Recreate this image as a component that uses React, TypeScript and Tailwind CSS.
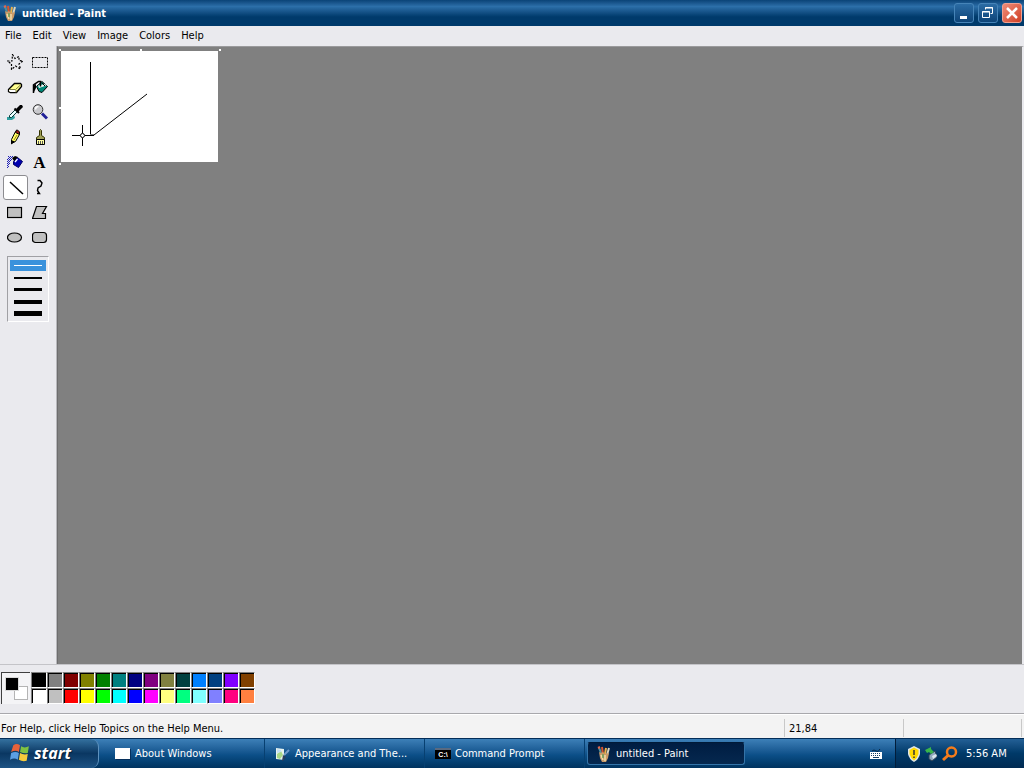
import type { ReactNode } from 'react';
import clsx from 'clsx';

const colors = [
  ['#000000', '#808080', '#800000', '#808000', '#008000', '#008080', '#000080', '#800080', '#808040', '#004040', '#0080ff', '#004080', '#8000ff', '#804000'],
  ['#ffffff', '#c0c0c0', '#ff0000', '#ffff00', '#00ff00', '#00ffff', '#0000ff', '#ff00ff', '#ffff80', '#00ff80', '#80ffff', '#8080ff', '#ff0080', '#ff8040'],
];

const tools: { name: string; icon: ReactNode }[] = [
  {
    name: 'Free-Form Select',
    icon: <path d="M5.500 .5L8 4.500l4-2v4l4 .5-4 3 1.500 5-5-3-4 3.500V10L.500 7h4.500z" fill="none" stroke="#000" strokeWidth="1.200" strokeDasharray="2 1.500" />,
  },
  {
    name: 'Select',
    icon: <rect x=".5" y="3.500" width="15" height="10" fill="none" stroke="#000" strokeDasharray="2 1" />,
  },
  {
    name: 'Eraser',
    icon: (
      <>
        <path d="M1.500 10.500l6-6h6l1 1v2l-5 6h-6l-2-1z" fill="#ffff90" stroke="#000" strokeWidth="1.300" />
        <path d="M2 10.500h6l1 .5v2H3.500L2 12z" fill="#fff" />
        <path d="M2 10.500h6.500l5.500-5M9 11v2.500" fill="none" stroke="#808040" />
      </>
    ),
  },
  {
    name: 'Fill With Color',
    icon: (
      <>
        <path d="M4.500 7.500L10 2.500l5.500 5-5.500 6-3-1z" fill="#008878" stroke="#000" />
        <path d="M6 6.500l7-1.500 1.500 1.500L7 9z" fill="#eef8f4" />
        <path d="M8.500 7.500V2.500h-2L1.500 6v8" fill="none" stroke="#000" strokeWidth="1.500" />
        <path d="M1 7l3-2v4l-2 4H1z" fill="#000" />
        <path d="M10 4l3 3" stroke="#000" />
      </>
    ),
  },
  {
    name: 'Pick Color',
    icon: (
      <>
        <path d="M0 13h5l2-2 1 3-3 2H0z" fill="#30a0a0" />
        <path d="M2.500 13.500v-2l6-6 2 2-6 6z" fill="#e8ffff" stroke="#083838" />
        <path d="M7.500 4.500l4.500 4.500" stroke="#000" strokeWidth="2" />
        <path d="M9 5l4-4h2l1 2-5 5z" fill="#000" />
      </>
    ),
  },
  {
    name: 'Magnifier',
    icon: (
      <>
        <path d="M10 9.500l5 5" stroke="#202098" strokeWidth="3" />
        <circle cx="6" cy="5.500" r="4.800" fill="#c8c8cc" stroke="#333" />
        <path d="M3.500 5.500a3 3 0 013-3" fill="none" stroke="#fff" strokeWidth="1.500" />
      </>
    ),
  },
  {
    name: 'Pencil',
    icon: (
      <>
        <path d="M4.500 14.500v-4l4-8h2l2 1v2l-4 7z" fill="#ffff60" stroke="#000" />
        <path d="M8.500 3.500l4 2V3l-2-2h-1z" fill="#a01818" stroke="#000" />
        <path d="M4 11v4.500l4-3z" fill="#000" />
        <path d="M10 6l-3 5" stroke="#a08020" />
      </>
    ),
  },
  {
    name: 'Brush',
    icon: (
      <>
        <path d="M7.500 6.500v-5l1-1 1 1v5l3 2v2h-8v-2z" fill="#a0a058" stroke="#333300" />
        <path d="M4.500 10.500h8v5h-8z" fill="#ffffa0" stroke="#000" />
        <path d="M6.500 12v3M8.500 12v3M10.500 12v3" stroke="#555" />
      </>
    ),
  },
  {
    name: 'Airbrush',
    icon: (
      <>
        <path
          d="M1 2h1v1H1zM3 2h1v1H3zM5 2h1v1H5zM2 3h1v1H2zM4 3h1v1H4zM1 4h1v1H1zM3 4h1v1H3zM0 5h1v1H0zM2 5h1v1H2zM4 5h1v1H4zM1 6h1v1H1zM3 6h1v1H3zM0 7h1v1H0zM2 7h1v1H2zM1 8h1v1H1zM0 9h1v1H0zM2 9h1v1H2zM1 10h1v1H1zM0 11h1v1H0zM1 12h1v1H1zM0 13h1v1H0z"
          fill="#2020b8"
        />
        <path d="M6.500 7.500l4-4 5 4-4 6-5-3z" fill="#0000b0" stroke="#000060" />
        <path d="M5 4l3-2 3 1-4 4z" fill="#000" />
        <path d="M8 8l2.500-3" stroke="#fff" strokeWidth="1.300" />
      </>
    ),
  },
  { name: 'Text', icon: null },
  { name: 'Line', icon: <path d="M2 2l13 12" stroke="#000" strokeWidth="1.500" /> },
  { name: 'Curve', icon: <path d="M5.500 1.500H8l2 2.500-1 3-3 2-.5 2.500 2 3H5" fill="none" stroke="#000" strokeWidth="1.400" /> },
  { name: 'Rectangle', icon: <rect x=".5" y="3.500" width="14" height="10" fill="#c0c0c0" stroke="#000" strokeWidth="1.200" /> },
  { name: 'Polygon', icon: <path d="M4.500 2.500h10l-4 7h3v5H.500z" fill="#c0c0c0" stroke="#000" strokeWidth="1.200" /> },
  { name: 'Ellipse', icon: <ellipse cx="7.500" cy="8.500" rx="7" ry="4.500" fill="#c0c0c0" stroke="#000" strokeWidth="1.200" /> },
  { name: 'Rounded Rectangle', icon: <rect x=".5" y="3.500" width="14" height="10" rx="3" fill="#c0c0c0" stroke="#000" strokeWidth="1.200" /> },
];

const lineWidths = [
  { label: '1 pixel', bar: 'h-px' },
  { label: '2 pixels', bar: 'h-0.5' },
  { label: '3 pixels', bar: 'h-[3px]' },
  { label: '4 pixels', bar: 'h-1' },
  { label: '5 pixels', bar: 'h-[5px]' },
];

function PaintIcon() {
  return (
    <svg viewBox="0 0 16 16" className="size-4 shrink-0">
      <path d="M3 2l3 7" stroke="#4f8f98" strokeWidth="2" />
      <path d="M6 1l1 7" stroke="#d8542c" strokeWidth="2" />
      <path d="M9 8l1-6" stroke="#e9b04a" strokeWidth="2" />
      <path d="M11 9l2-7" stroke="#ded5bd" strokeWidth="2" />
      <path d="M3 6l2 1 2-1 2 2 4-1-1 5-2 4H6l-2-4z" fill="#c99a68" />
      <path d="M5 9l2 5M9 9v6" stroke="#f0dda8" strokeWidth="1.500" />
      <path d="M7 8v4" stroke="#6b9f5d" strokeWidth="1.500" />
      <path d="M2 2l2-1" stroke="#e6674c" strokeWidth="2" />
    </svg>
  );
}

function WindowIcon() {
  return (
    <svg viewBox="0 0 16 16" className="size-4 shrink-0">
      <path d="M1 3h15v11H1z" fill="#06305c" />
      <path d="M0 2h15v11H0z" fill="#fff" />
    </svg>
  );
}

function AppearanceIcon() {
  return (
    <svg viewBox="0 0 16 16" className="size-4 shrink-0">
      <path d="M1 2l8 1v11l-8-1z" fill="#e8f4f0" />
      <path d="M2 8l4-3 2 4-3 4-3-1z" fill="#a8d888" />
      <path d="M2 3l4 1v2L2 7z" fill="#c4e0f4" />
      <path d="M14 4l-5 5" stroke="#6c98cc" strokeWidth="2" />
      <path d="M8 9l3 2-3 4H7z" fill="#283c5c" />
    </svg>
  );
}

function CommandIcon() {
  return (
    <span className="flex h-[11px] w-4 shrink-0 items-center justify-center border-t-2 border-[#5a6a80] bg-black font-['Liberation_Sans'] text-[7px] leading-none font-bold text-white">
      C:\
    </span>
  );
}

const tasks = [
  { label: 'About Windows', icon: <WindowIcon /> },
  { label: 'Appearance and The...', icon: <AppearanceIcon /> },
  { label: 'Command Prompt', icon: <CommandIcon /> },
  { label: 'untitled - Paint', icon: <PaintIcon />, active: true },
];

function TitleBar() {
  return (
    <header className="flex h-[26px] items-center bg-linear-to-b from-[#0a4377] via-[#2c6fa9] via-25% to-[#003a6b] to-65% px-0.5">
      <PaintIcon />
      <h1 className="ml-1 flex-1 text-[11px] font-bold text-white">untitled - Paint</h1>
      <div className="flex gap-1">
        <button aria-label="Minimize" className="size-5 rounded-[3px] border border-[#4684b8] bg-linear-to-b from-[#2b6ca5] to-[#0d4478]">
          <svg viewBox="0 0 18 18"><path d="M5 12h7v3H5z" fill="#fff" /></svg>
        </button>
        <button aria-label="Restore" className="size-5 rounded-[3px] border border-[#4684b8] bg-linear-to-b from-[#2b6ca5] to-[#0d4478]">
          <svg viewBox="0 0 18 18" fill="none" stroke="#fff">
            <path d="M3.500 7.500h7v6h-7zM3 8h8M6.500 5.500v-2h7v6h-2M6 4h8" />
          </svg>
        </button>
        <button aria-label="Close" className="size-5 rounded-[3px] border border-[#f0a090] bg-linear-to-br from-[#ee8b78] to-[#cf3c20]">
          <svg viewBox="0 0 18 18"><path d="M4 4l10 10M14 4L4 14" stroke="#fff" strokeWidth="2.500" /></svg>
        </button>
      </div>
    </header>
  );
}

function Toolbox() {
  return (
    <aside className="w-[57px] shrink-0 border-r border-[#b8b8bc] pt-1 pl-[3px]">
      <div className="grid w-[50px] grid-cols-2">
        {tools.map(({ name, icon }) => (
          <button
            key={name}
            aria-label={name === 'Text' ? undefined : name}
            className={clsx(
              'flex size-[25px] items-center justify-center',
              name === 'Line' ? 'rounded-[3px] border border-[#8c8c90] bg-white' : 'pr-0.5 pb-px'
            )}
          >
            {name === 'Text' ? (
              <span className="font-['Liberation_Serif'] text-[17px] leading-none font-bold">A</span>
            ) : (
              <svg viewBox="0 0 16 16" className="size-4">{icon}</svg>
            )}
          </button>
        ))}
      </div>
      <div className="mt-1.5 ml-1 flex h-[66px] w-[42px] flex-col border border-t-[#a0a0a4] border-r-white border-b-white border-l-[#a0a0a4] px-0.5 py-0.5">
        {lineWidths.map(({ label, bar }, i) => (
          <button
            key={label}
            aria-label={label}
            className={clsx('flex h-3 w-full items-center justify-center border-t border-[#eaeaee]', i === 0 && 'bg-[#3a92dc]')}
          >
            <span className={clsx('w-7', bar, i === 0 ? 'bg-white' : 'bg-black')} />
          </button>
        ))}
      </div>
    </aside>
  );
}

function Canvas() {
  return (
    <main className="flex-1 border-t border-r-2 border-t-[#9a9a9c] border-r-[#eaeaee] border-l border-l-[#6e6e6e] bg-[#808080] pt-0.5 pl-px">
      <svg viewBox="0 0 162 116" className="h-[116px] w-[162px]">
        <path d="M2 2h157v111H2z" fill="#fff" />
        <g fill="none" stroke="#000">
          <path d="M31.500 13v72M31 86h4l53-41" />
          <path d="M13 86.500h8M26 86.500h9M23.500 76v8M23.500 89v8" />
          <circle cx="23.500" cy="86.500" r="2" />
        </g>
        <path d="M0 0h2v2H0zM81 0h2v2h-2zM160 0h2v2h-2zM0 58h2v2H0zM0 114h2v2H0z" fill="#fff" />
      </svg>
    </main>
  );
}

function ColorBox() {
  return (
    <section aria-label="Color box" className="flex h-[50px] items-start gap-px border-t border-b border-t-[#c4c4c8] border-b-[#a8a8ac] pt-[7px] pl-px">
      <div className="relative h-8 w-[29px] border-t border-l border-[#404040] bg-[#f4f4f6]">
        <span className="absolute right-0.5 bottom-1 size-3.5 border border-[#b4b4b4] bg-white" />
        <span className="absolute top-1 left-[3px] size-3.5 border border-[#d8d8d8] bg-black" />
      </div>
      <div className="grid grid-cols-[repeat(14,16px)] grid-rows-[16px_16px]">
        {colors.flat().map((color) => (
          <button key={color} aria-label={color} className="border border-t-[#808080] border-r-white border-b-white border-l-[#808080] p-0">
            <span className="block size-full border-t border-l border-black" style={{ backgroundColor: color }} />
          </button>
        ))}
      </div>
    </section>
  );
}

function StatusBar() {
  return (
    <footer className="flex h-6 items-center border-t border-white bg-[#f3f3f3] pt-[3px] pr-0.5 text-[11px] whitespace-nowrap">
      <p className="flex-1 pl-px">For Help, click Help Topics on the Help Menu.</p>
      <p className="flex h-[18px] w-[119px] items-center border-l border-[#c8c8c8] pl-1">21,84</p>
      <p className="h-[18px] w-[119px] border-x border-[#c8c8c8]" />
    </footer>
  );
}

function Taskbar() {
  return (
    <nav aria-label="Taskbar" className="flex h-[30px] border-t border-[#032d58] bg-linear-to-b from-[#3d80b8] via-[#0c4f88] via-55% to-[#00335f] text-[11px] whitespace-nowrap text-white">
      <button className="mr-2 flex w-[99px] items-center rounded-r-lg border-r border-[#5d91bd] bg-linear-to-b from-[#34719f] via-[#0a3762] via-50% to-[#1d5384] pb-0.5 pl-2.5">
        <svg viewBox="0 0 18 18" className="size-5">
          <path d="M3 2q3-2 6 0L8 8Q5 6 1 8z" fill="#e8623a" />
          <path d="M10 3q3 2 7 0l-1 6q-3 1-7-1z" fill="#7fc241" />
          <path d="M1 9q4-2 7 0l-1 6q-3-2-7 0z" fill="#5b9fe4" />
          <path d="M9 9q3 2 7 1l-1 6q-4 1-7-1z" fill="#f6cb3c" />
        </svg>
        <span className="ml-1 font-['Open_Sans'] text-base leading-none font-bold italic [text-shadow:1px_1px_1px_#001c38]">start</span>
      </button>
      <div className="flex flex-1 gap-0.5">
        {tasks.map(({ label, icon, active }) => (
          <button
            key={label}
            className={clsx(
              'flex w-[158px] items-center gap-1 border-r pl-2',
              active
                ? 'my-[3px] rounded-[3px] border border-[#3474a8] border-t-[#001a38] bg-linear-to-b from-[#001d42] to-[#06284f]'
                : 'border-[#074071]'
            )}
          >
            {icon}
            {label}
          </button>
        ))}
      </div>
      <button aria-label="Keyboard" className="mr-3">
        <svg viewBox="0 0 14 14" className="size-3.5">
          <path d="M3 4q2-2 4 0t4-2" fill="none" stroke="#062848" />
          <path d="M1 5h12v7H1z" fill="#fff" />
          <path d="M2 6.500h10M2 8.500h10" stroke="#173d63" strokeDasharray="1 1" />
          <path d="M4 10.500h6" stroke="#173d63" />
        </svg>
      </button>
      <div className="flex w-[129px] items-center border-l border-[#021d3a] bg-linear-to-b from-[#236096] via-[#003968] via-50% to-[#002a52] pl-2.5">
        <svg viewBox="0 0 16 16" className="size-4">
          <path d="M8 0l6 3v5q-1 5-6 8-5-3-6-8V3z" fill="#dfe5e8" />
          <path d="M8 1.500l4.500 2.500v4q-1 4-4.500 6.500Q4.500 12 3.500 8V4z" fill="#ffda00" />
          <path d="M8 4v5M8 10.500V12" stroke="#333" strokeWidth="1.500" />
        </svg>
        <svg viewBox="0 0 16 16" className="ml-0.5 size-4">
          <path d="M5 9l6-4 2 6-5 4-3-2z" fill="#93a9bd" stroke="#2c4258" />
          <path d="M8 10l4-2 1 2-4 3z" fill="#dce8f0" />
          <path d="M1 4l6-3v2l3 3-3 2-2-2-2 1z" fill="#39b54a" />
        </svg>
        <svg viewBox="0 0 16 16" className="ml-0.5 size-4">
          <circle cx="9.500" cy="6" r="4.500" fill="none" stroke="#f57c1b" strokeWidth="2.500" />
          <path d="M6.500 9L1 14" stroke="#f57c1b" strokeWidth="3" />
        </svg>
        <time className="ml-2">5:56 AM</time>
      </div>
    </nav>
  );
}

export default function App() {
  return (
    <div className="flex min-h-screen flex-col bg-[#eaeaee] font-['DejaVu_Sans_Condensed','DejaVu_Sans',sans-serif] leading-none text-black">
      <TitleBar />
      <nav aria-label="Menu" className="flex h-5 items-center gap-[11px] pb-0.5 pl-[5px] text-[11px]">
        {['File', 'Edit', 'View', 'Image', 'Colors', 'Help'].map((item) => (
          <button key={item}>{item}</button>
        ))}
      </nav>
      <div className="flex flex-1">
        <Toolbox />
        <Canvas />
      </div>
      <ColorBox />
      <StatusBar />
      <Taskbar />
    </div>
  );
}
